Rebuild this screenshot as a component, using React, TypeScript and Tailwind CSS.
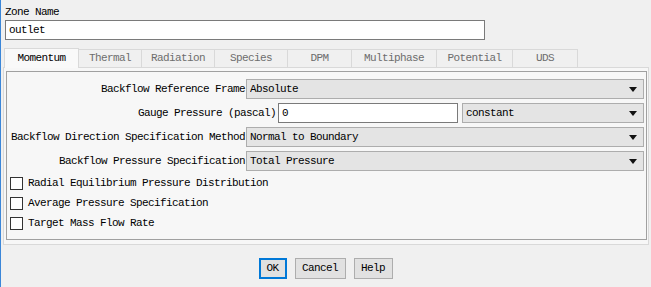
import React from "react";

const font = { fontFamily: '"Liberation Mono", "DejaVu Sans Mono", monospace' };

function Arrow() {
  return (
    <svg width="8" height="5" viewBox="0 0 8 5" className="shrink-0">
      <path d="M0 0 L8 0 L4 5 Z" fill="#111" />
    </svg>
  );
}

function Select({ value, className = "" }: { value: string; className?: string }) {
  return (
    <div
      className={`h-[20px] bg-[#e4e4e4] border border-[#adadad] flex items-center pl-[3px] pr-[6px] ${className}`}
    >
      <span className="flex-1 truncate">{value}</span>
      <Arrow />
    </div>
  );
}

function Check({ label }: { label: string }) {
  return (
    <div className="h-[20px] flex items-center">
      <div className="w-[13px] h-[13px] border border-[#333] bg-white ml-[3px] mr-[5px]" />
      <span>{label}</span>
    </div>
  );
}

const tabs: { name: string; w: number }[] = [
  { name: "Thermal", w: 63 },
  { name: "Radiation", w: 73 },
  { name: "Species", w: 73 },
  { name: "DPM", w: 64 },
  { name: "Multiphase", w: 85 },
  { name: "Potential", w: 76 },
  { name: "UDS", w: 65 },
];

export default function App() {
  return (
    <div
      className="w-[651px] h-[287px] bg-[#f0f0f0] border-l border-[#3b86d8] text-[11px] tracking-[-0.6px] text-black overflow-hidden"
      style={font}
    >
      <div className="pl-[4px] pt-[4px] leading-[16px] h-[20px]">Zone Name</div>
      <div className="ml-[4px] w-[480px] h-[20px] bg-white border border-[#7a7a7a] flex items-center pl-[3px]">
        outlet
      </div>

      {/* tabs */}
      <div className="mt-[8px] ml-[3px] flex items-end h-[20px] relative z-10">
        <div className="w-[75px] h-[20px] bg-[#f9f9f9] border border-b-0 border-[#d9d9d9] flex items-center justify-center">
          Momentum
        </div>
        {tabs.map((t) => (
          <div
            key={t.name}
            style={{ width: t.w }}
            className="h-[18px] border-t border-r border-[#d9d9d9] flex items-center justify-center text-[#6d6d6d] bg-[#f0f0f0] mb-[1px]"
          >
            {t.name}
          </div>
        ))}
      </div>

      {/* tab page */}
      <div className="-mt-[1px] ml-[2px] w-[646px] h-[178px] border border-[#d9d9d9] bg-[#f7f7f7] pt-[3px] pl-[2px] pr-[1px]">
        <div className="h-[169px] border border-[#a0a0a0] pt-[7px] pr-[2px]">
          <div className="flex items-center h-[20px]">
            <div className="w-[239px] text-right pr-[1px] whitespace-nowrap">Backflow Reference Frame</div>
            <Select value="Absolute" className="flex-1" />
          </div>
          <div className="flex items-center h-[20px] mt-[4px]">
            <div className="w-[271px] text-right pr-[2px] whitespace-nowrap">Gauge Pressure (pascal)</div>
            <div className="w-[180px] h-[20px] bg-white border border-[#7a7a7a] flex items-center pl-[3px]">0</div>
            <Select value="constant" className="flex-1 ml-[4px]" />
          </div>
          <div className="flex items-center h-[20px] mt-[4px]">
            <div className="w-[239px] text-right pr-[1px] whitespace-nowrap">Backflow Direction Specification Method</div>
            <Select value="Normal to Boundary" className="flex-1" />
          </div>
          <div className="flex items-center h-[20px] mt-[4px]">
            <div className="w-[239px] text-right pr-[1px] whitespace-nowrap">Backflow Pressure Specification</div>
            <Select value="Total Pressure" className="flex-1" />
          </div>
          <div className="mt-[2px]">
            <Check label="Radial Equilibrium Pressure Distribution" />
            <Check label="Average Pressure Specification" />
            <Check label="Target Mass Flow Rate" />
          </div>
        </div>
      </div>

      {/* buttons */}
      <div className="mt-[13px] flex justify-center gap-[8px] pr-[1px]">
        <div className="w-[28px] h-[21px] bg-[#e1e1e1] border-2 border-[#0078d7] flex items-center justify-center">OK</div>
        <div className="w-[51px] h-[21px] bg-[#e1e1e1] border border-[#adadad] flex items-center justify-center">Cancel</div>
        <div className="w-[39px] h-[21px] bg-[#e1e1e1] border border-[#adadad] flex items-center justify-center">Help</div>
      </div>
    </div>
  );
}
